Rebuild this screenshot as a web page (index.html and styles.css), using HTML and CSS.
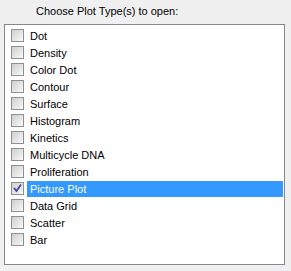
FILE: index.html
```html
<!DOCTYPE html>
<html lang="en">
<head>
    <meta charset="UTF-8">
    <meta name="viewport" content="width=device-width, initial-scale=1.0">
    <title>Choose Plot Types</title>
    <link rel="stylesheet" href="styles.css">
</head>
<body>
    <div class="title">Choose Plot Type(s) to open:</div>
    <div class="list-box">
        <div class="row"><span class="check"></span><span class="label">Dot</span></div>
        <div class="row"><span class="check"></span><span class="label">Density</span></div>
        <div class="row"><span class="check"></span><span class="label">Color Dot</span></div>
        <div class="row"><span class="check"></span><span class="label">Contour</span></div>
        <div class="row"><span class="check"></span><span class="label">Surface</span></div>
        <div class="row"><span class="check"></span><span class="label">Histogram</span></div>
        <div class="row"><span class="check"></span><span class="label">Kinetics</span></div>
        <div class="row"><span class="check"></span><span class="label">Multicycle DNA</span></div>
        <div class="row"><span class="check"></span><span class="label">Proliferation</span></div>
        <div class="row selected">
            <span class="check">
                <svg width="11" height="11" viewBox="0 0 11 11"><path d="M2 5 L4.5 8 L9 1.5" fill="none" stroke="#3d4b9c" stroke-width="1.8"/></svg>
            </span>
            <span class="label">Picture Plot</span>
        </div>
        <div class="row"><span class="check"></span><span class="label">Data Grid</span></div>
        <div class="row"><span class="check"></span><span class="label">Scatter</span></div>
        <div class="row"><span class="check"></span><span class="label">Bar</span></div>
    </div>
</body>
</html>
```

FILE: styles.css
```css
body {
    margin: 0;
    background-color: #f0f0f0;
    font-family: "Liberation Sans", Arial, sans-serif;
    font-size: 11px;
    color: #000;
}
.title {
    height: 20px;
    padding: 4px 0 0 36px;
    line-height: 14px;
}
.list-box {
    margin-left: 4px;
    width: 279px;
    height: 237px;
    padding-top: 2px;
    background: white;
    border: 1px solid #828790;
}
.row {
    display: flex;
    align-items: center;
    height: 17px;
    padding-left: 6px;
}
.check {
    width: 11px;
    height: 11px;
    border: 1px solid #8f8f8f;
    background: linear-gradient(135deg, #cfcfcf, #f0f0f0 80%, #ffffff);
    display: flex;
    align-items: center;
    justify-content: center;
}
.label {
    flex: 1;
    margin-left: 3px;
    margin-right: 1px;
    padding-left: 3px;
    height: 16px;
    line-height: 16px;
}
.selected .label {
    background-color: #3399ff;
    color: white;
}
```
